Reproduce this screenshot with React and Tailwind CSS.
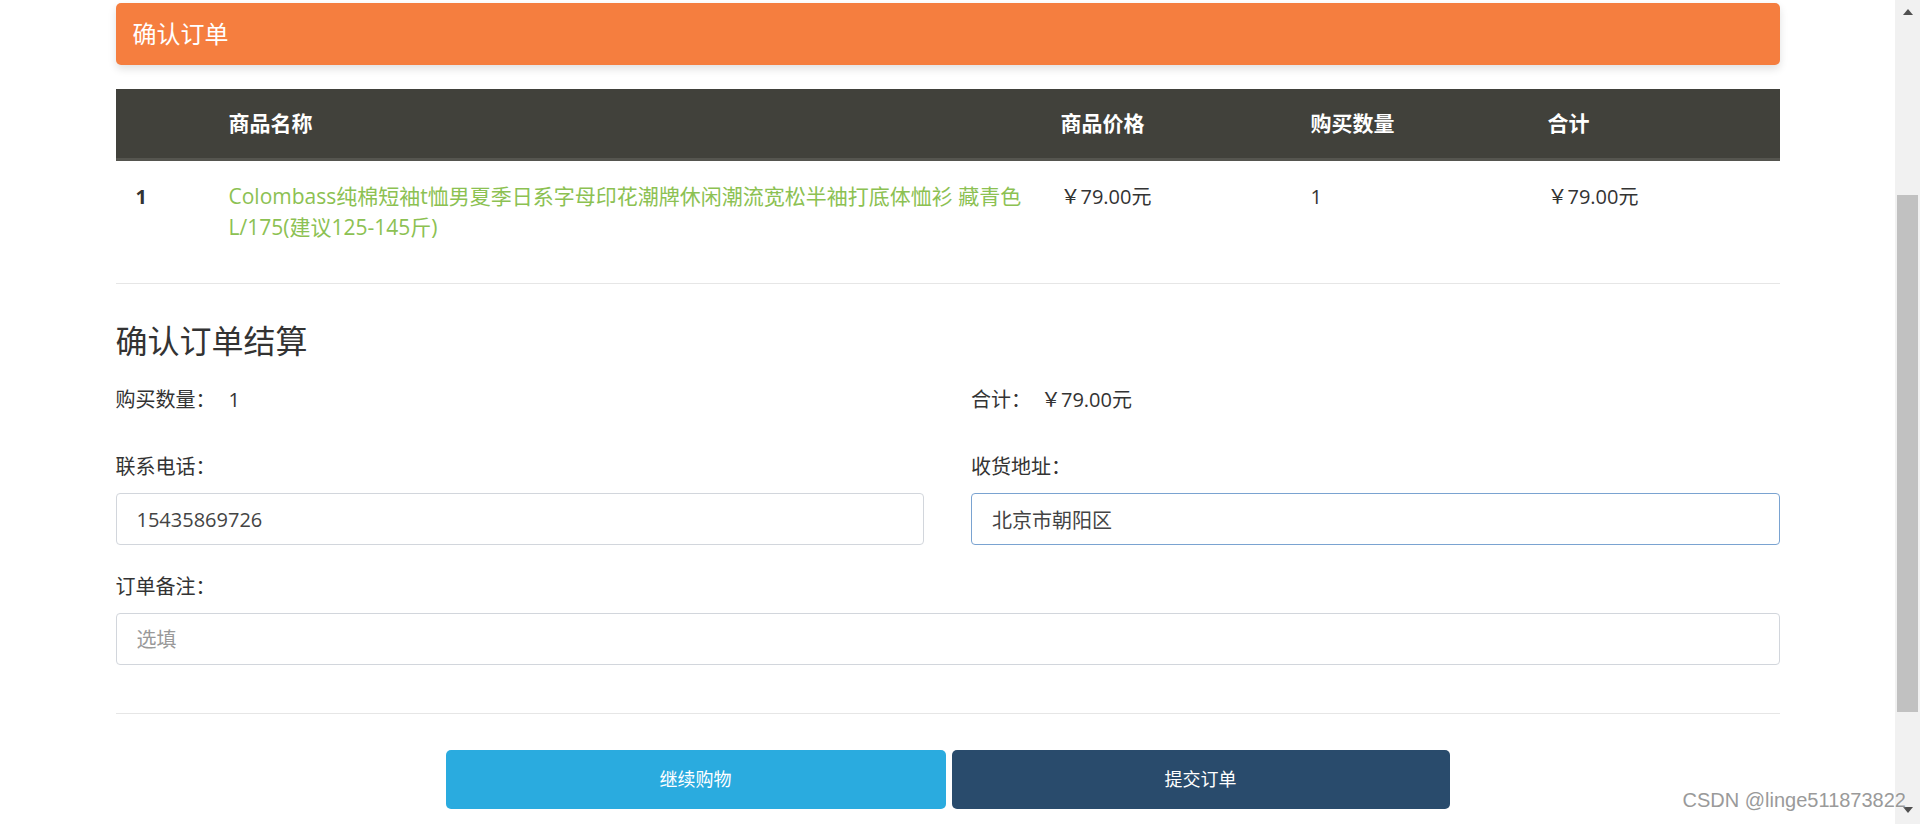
import React from "react";

const item = {
  index: 1,
  name: "Colombass纯棉短袖t恤男夏季日系字母印花潮牌休闲潮流宽松半袖打底体恤衫 藏青色",
  spec: "L/175(建议125-145斤)",
  price: "￥79.00元",
  count: 1,
  total: "￥79.00元",
};

const cols = "grid grid-cols-[93px_832px_250px_237px_252px]";

const Field = ({ label, value, placeholder, focused }) => (
  <label className="block">
    <span className="block text-[20px] leading-[27px] text-[#333]">{label}</span>
    <input
      defaultValue={value}
      placeholder={placeholder}
      className={
        "mt-[13px] block w-full h-[52px] rounded-[4px] border bg-white px-[20px] text-[20px] text-[#444] placeholder:text-[#999] outline-none " +
        (focused ? "border-[#7aa3d1]" : "border-[#d2d6dc]")
      }
    />
  </label>
);

export default function App() {
  return (
    <div
      className="relative flex h-[824px] w-full overflow-hidden bg-white"
      style={{ fontFamily: '"Open Sans", "Noto Sans CJK SC", sans-serif' }}
    >
      <div className="flex-1">
        <div className="mx-auto w-[1664px] pt-[3px]">
          <div className="flex h-[62px] items-center rounded-[5px] bg-[#f57e3f] px-[17px] text-[24px] text-white shadow-[0_4px_8px_rgba(0,0,0,0.12)]">
            确认订单
          </div>

          <div className="mt-[24px]">
            <div className={cols + " h-[72px] items-center border-b-[3px] border-[#55554f] bg-[#41413b] text-[21px] font-bold text-white"}>
              <div></div>
              <div className="pl-[20px]">商品名称</div>
              <div className="pl-[20px]">商品价格</div>
              <div className="pl-[20px]">购买数量</div>
              <div className="pl-[20px]">合计</div>
            </div>
            <div className={cols + " border-b border-[#e6e6e6] pt-[20px] pb-[40px] text-[20px] leading-[31px] text-[#333]"}>
              <div className="pl-[20px] font-bold">{item.index}</div>
              <div className="pl-[20px] text-[21px] text-[#8cc152]">
                <div className="whitespace-nowrap">{item.name}</div>
                <div className="whitespace-nowrap">{item.spec}</div>
              </div>
              <div className="pl-[20px]">{item.price}</div>
              <div className="pl-[20px]">{item.count}</div>
              <div className="pl-[20px]">{item.total}</div>
            </div>
          </div>

          <h2 className="mt-[37px] text-[32px] leading-[40px] font-normal text-[#333]">确认订单结算</h2>

          <div className="mt-[25px] grid grid-cols-2 gap-x-[47px] text-[20px] leading-[27px] text-[#333]">
            <div className="flex">
              <span className="w-[113px]">购买数量：</span>
              <span>{item.count}</span>
            </div>
            <div className="flex">
              <span className="w-[70px]">合计：</span>
              <span>{item.total}</span>
            </div>
          </div>

          <div className="mt-[40px] grid grid-cols-2 gap-x-[47px]">
            <Field label="联系电话：" value="15435869726" />
            <Field label="收货地址：" value="北京市朝阳区" focused />
          </div>

          <div className="mt-[28px]">
            <Field label="订单备注：" placeholder="选填" />
          </div>

          <div className="mt-[48px] border-t border-[#e6e6e6]"></div>

          <div className="mt-[36px] flex justify-center gap-[6px]">
            <button className="h-[59px] w-[500px] rounded-[5px] bg-[#2aabdf] text-[18px] text-white">继续购物</button>
            <button className="h-[59px] w-[498px] rounded-[5px] bg-[#294b6c] text-[18px] text-white">提交订单</button>
          </div>
        </div>
      </div>

      <div className="flex w-[25px] flex-col items-center bg-[#f1f1f1]">
        <div className="mt-[9px] h-0 w-0 border-x-[5px] border-b-[6px] border-x-transparent border-b-[#505050]"></div>
        <div className="mt-[180px] h-[517px] w-[21px] bg-[#c1c1c1]"></div>
        <div className="mt-[95px] h-0 w-0 border-x-[5px] border-t-[6px] border-x-transparent border-t-[#505050]"></div>
      </div>

      <div
        className="absolute right-[14px] bottom-[9px] text-[20px] text-[#9a9a9a]"
        style={{ fontFamily: '"Liberation Sans Narrow", "Liberation Sans", sans-serif', textShadow: "0 0 2px #fff" }}
      >
        CSDN @linge511873822
      </div>
    </div>
  );
}
